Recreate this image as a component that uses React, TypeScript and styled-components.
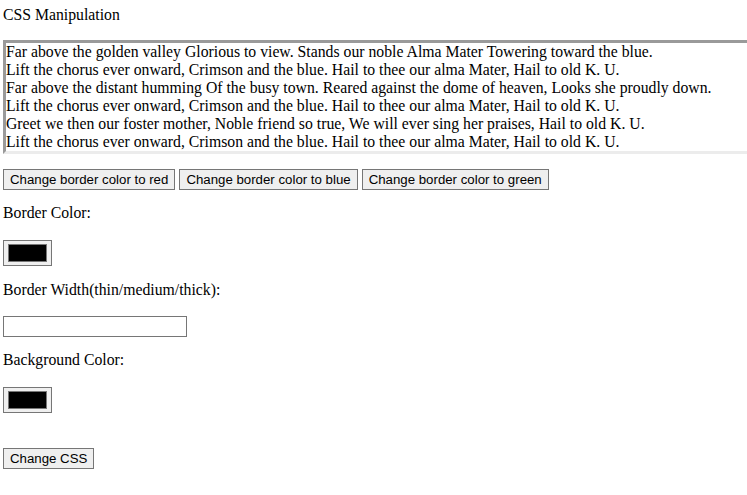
import React from 'react';
import styled, { createGlobalStyle } from 'styled-components';

const GlobalStyle = createGlobalStyle`
    html, body {
        margin: 0;
        padding: 0;
        background: #ffffff;
        overflow: hidden;
    }
    body {
        font-family: 'Liberation Serif', 'Times New Roman', serif;
        font-size: 15.75px;
        color: #000000;
    }
`;

const Page = styled.div`
    padding: 6px 0 0 3px;
    display: flex;
    flex-direction: column;
    align-items: flex-start;
`;

const Label = styled.div<{ $top: number }>`
    margin-top: ${props => props.$top}px;
    line-height: 18px;
    height: 18px;
    white-space: nowrap;
`;

const LyricsBox = styled.div`
    margin-top: 16px;
    width: 760px;
    border-style: solid;
    border-width: 3px;
    border-color: #9a9a9a #ececec #ececec #9a9a9a;
    line-height: 18px;
    white-space: nowrap;
`;

const ButtonRow = styled.div<{ $top: number }>`
    margin-top: ${props => props.$top}px;
    display: flex;
    gap: 4px;
`;

const Button = styled.button`
    height: 21px;
    margin: 0;
    padding: 1px 6px;
    border: 1px solid #767676;
    border-radius: 0;
    background: #efefef;
    color: #000000;
    font-family: 'Liberation Sans', Arial, sans-serif;
    font-size: 13.25px;
    line-height: 17px;
    white-space: nowrap;
    cursor: pointer;
`;

const ColorPicker = styled.input<{ $top: number }>`
    margin: ${props => props.$top}px 0 0 0;
    width: 49px;
    height: 26px;
    padding: 3px 4px;
    border: 1px solid #767676;
    border-radius: 0;
    background: #efefef;
    box-sizing: border-box;
    cursor: pointer;

    &::-webkit-color-swatch-wrapper {
        padding: 0;
    }
    &::-webkit-color-swatch {
        border: 1px solid #777777;
        border-radius: 0;
    }
`;

const TextField = styled.input<{ $top: number }>`
    margin: ${props => props.$top}px 0 0 0;
    width: 184px;
    height: 21px;
    padding: 1px 2px;
    border: 1px solid #767676;
    border-radius: 0;
    box-sizing: border-box;
    font-family: 'Liberation Sans', Arial, sans-serif;
    font-size: 13.33px;
`;

const lyrics = [
    'Far above the golden valley Glorious to view. Stands our noble Alma Mater Towering toward the blue.',
    'Lift the chorus ever onward, Crimson and the blue. Hail to thee our alma Mater, Hail to old K. U.',
    'Far above the distant humming Of the busy town. Reared against the dome of heaven, Looks she proudly down.',
    'Lift the chorus ever onward, Crimson and the blue. Hail to thee our alma Mater, Hail to old K. U.',
    'Greet we then our foster mother, Noble friend so true, We will ever sing her praises, Hail to old K. U.',
    'Lift the chorus ever onward, Crimson and the blue. Hail to thee our alma Mater, Hail to old K. U.'
];

const App = () => {
    return (
        <Page>
            <GlobalStyle />
            <Label $top={0}>CSS Manipulation</Label>
            <LyricsBox>
                {lyrics.map((line, i) => (
                    <div key={i}>{line}</div>
                ))}
            </LyricsBox>
            <ButtonRow $top={15}>
                <Button>Change border color to red</Button>
                <Button>Change border color to blue</Button>
                <Button>Change border color to green</Button>
            </ButtonRow>
            <Label $top={14}>Border Color:</Label>
            <ColorPicker $top={18} type="color" defaultValue="#000000" />
            <Label $top={15}>Border Width(thin/medium/thick):</Label>
            <TextField $top={17} type="text" />
            <Label $top={14}>Background Color:</Label>
            <ColorPicker $top={18} type="color" defaultValue="#000000" />
            <ButtonRow $top={35}>
                <Button>Change CSS</Button>
            </ButtonRow>
        </Page>
    );
};

export default App;
